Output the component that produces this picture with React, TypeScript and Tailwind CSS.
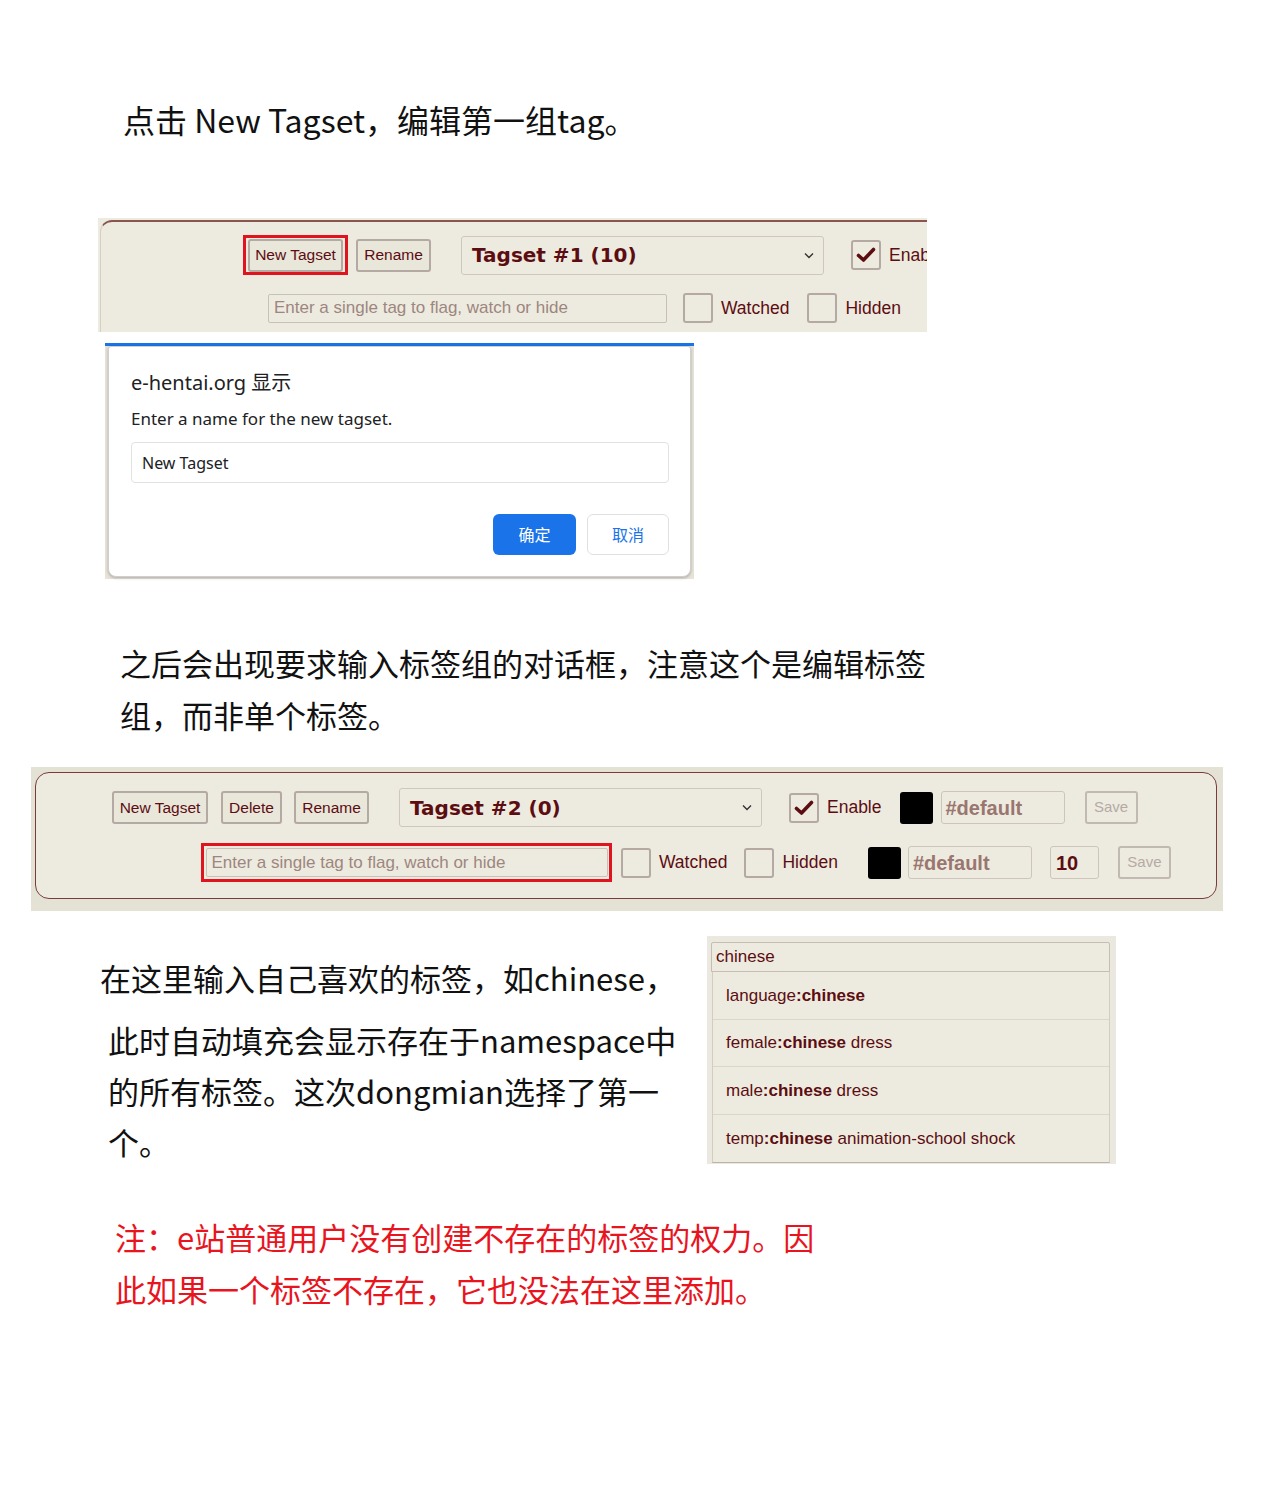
import React from "react";

const cjk = "font-['Noto_Sans_CJK_SC','Noto_Sans',sans-serif]";
const ui = "font-['Liberation_Sans',Arial,sans-serif]";
const verd = "font-['DejaVu_Sans',Verdana,sans-serif]";
const dlg = "font-['Noto_Sans','Noto_Sans_CJK_SC',sans-serif]";

function Check({ checked = false }: { checked?: boolean }) {
  return (
    <span className="flex h-[30px] w-[30px] shrink-0 items-center justify-center rounded-[3px] border-2 border-[#b4a9a3] bg-[#edebdf]">
      {checked && (
        <svg width="20" height="16" viewBox="0 0 20 16">
          <path
            d="M2.5 8.5 L7.5 13 L17.5 2.5"
            fill="none"
            stroke="#5c0d12"
            strokeWidth="3.6"
            strokeLinecap="round"
            strokeLinejoin="round"
          />
        </svg>
      )}
    </span>
  );
}

function Btn({ children, className = "" }: { children: React.ReactNode; className?: string }) {
  return (
    <span
      className={
        ui +
        " flex h-[33px] shrink-0 items-center justify-center rounded-[3px] border-2 border-[#b4a9a3] bg-[#e9e6da] text-[15.5px] text-[#5c0d12] " +
        className
      }
    >
      {children}
    </span>
  );
}

function TagSelect({ label }: { label: string }) {
  return (
    <div className="flex h-[39px] w-[363px] shrink-0 items-center justify-between rounded-[3px] border border-[#cfc7bd] bg-[#edebdf] pl-[10px] pr-[9px]">
      <span className={verd + " text-[20px] font-bold text-[#5c0d12]"}>{label}</span>
      <svg width="10" height="7" viewBox="0 0 10 7">
        <path d="M1 1.5l4 4 4-4" fill="none" stroke="#333" strokeWidth="1.4" />
      </svg>
    </div>
  );
}

function TagInput({ width }: { width: string }) {
  return (
    <div
      className={
        ui +
        " flex h-[29px] shrink-0 items-center rounded-[2px] border border-[#c9c0b6] bg-[#edebdf] pl-[5px] text-[17px] text-[#9d8680] " +
        width
      }
    >
      Enter a single tag to flag, watch or hide
    </div>
  );
}

function Swatch() {
  return <span className="block h-[32px] w-[33px] shrink-0 rounded-[3px] bg-black" />;
}

function ColorField({ width }: { width: string }) {
  return (
    <span
      className={
        ui +
        " flex h-[33px] shrink-0 items-center rounded-[3px] border border-[#cdc5bb] bg-[#edebdf] pl-[4px] text-[20px] font-bold text-[#9a7670] " +
        width
      }
    >
      #default
    </span>
  );
}

function SaveBtn() {
  return (
    <span
      className={
        ui +
        " flex h-[33px] w-[53px] shrink-0 items-center justify-center rounded-[3px] border-2 border-[#c2b9b3] bg-[#edebdf] text-[15px] text-[#b5aaa5]"
      }
    >
      Save
    </span>
  );
}

function Label({ children }: { children: React.ReactNode }) {
  return <span className={ui + " whitespace-nowrap text-[17.5px] text-[#5c0d12]"}>{children}</span>;
}

function Suggestion({ ns, rest, last = false }: { ns: string; rest?: string; last?: boolean }) {
  return (
    <div
      className={
        ui +
        " flex h-[47.5px] items-center pl-[13px] text-[17px] text-[#5c0d12] " +
        (last ? "" : "border-b border-[#dcd6ca]")
      }
    >
      <span>{ns}</span>
      <span className="font-bold">:chinese</span>
      {rest && <span>&nbsp;{rest}</span>}
    </div>
  );
}

export default function App() {
  return (
    <div className="min-h-[1487px] w-[1280px] bg-white text-[#111]">
      {/* heading */}
      <p className={cjk + " ml-[123px] pt-[93px] text-[32px] leading-[52px]"}>
        点击 New Tagset，编辑第一组tag。
      </p>

      {/* tagset toolbar */}
      <div className="ml-[98px] mt-[73px] h-[114px] w-[829px] overflow-hidden bg-[#edebdf]">
        <div className="ml-[2px] mt-[2px] h-full w-[900px] rounded-tl-[12px] border-l border-t-2 border-l-[#d6cfc3] border-t-[#8a5550] pt-[13px]">
          <div className="flex items-center pl-[142px]">
            <span className="flex h-[40px] w-[105px] shrink-0 items-center justify-center border-[3px] border-[#e0141e]">
              <Btn className="w-[95px]">New Tagset</Btn>
            </span>
            <Btn className="ml-[8px] w-[75px]">Rename</Btn>
            <div className="ml-[30px] shrink-0">
              <TagSelect label="Tagset #1 (10)" />
            </div>
            <span className="ml-[27px] shrink-0">
              <Check checked />
            </span>
            <span className="ml-[8px] shrink-0">
              <Label>Enable</Label>
            </span>
          </div>
          <div className="mt-[18px] flex items-center pl-[167px]">
            <TagInput width="w-[399px]" />
            <span className="ml-[16px] shrink-0">
              <Check />
            </span>
            <span className="ml-[8px] shrink-0">
              <Label>Watched</Label>
            </span>
            <span className="ml-[18px] shrink-0">
              <Check />
            </span>
            <span className="ml-[8px] shrink-0">
              <Label>Hidden</Label>
            </span>
          </div>
        </div>
      </div>

      {/* prompt dialog */}
      <div className="ml-[105px] mt-[11px] h-[236px] w-[589px] border-t-[3px] border-[#1a73e8] bg-[#e7e3d8] px-[3px] pb-[2px]">
        <div
          className={
            dlg +
            " h-full rounded-b-[8px] rounded-t-[3px] border border-[#cfcfcf] bg-white pl-[22px] pr-[21px] shadow-[0_1px_3px_rgba(0,0,0,0.25)]"
          }
        >
          <p className="pt-[22px] text-[20px] leading-[28px] text-[#202124]">e-hentai.org 显示</p>
          <p className="mt-[10px] text-[17px] leading-[24px] text-[#202124]">
            Enter a name for the new tagset.
          </p>
          <div className="mt-[11px] flex h-[41px] items-center rounded-[4px] border border-[#e2e2e2] pl-[10px] text-[16px] text-[#202124]">
            New Tagset
          </div>
          <div className="mt-[31px] flex justify-end gap-[11px]">
            <span className="flex h-[41px] w-[83px] items-center justify-center rounded-[6px] bg-[#1a73e8] text-[16px] text-white">
              确定
            </span>
            <span className="flex h-[41px] w-[82px] items-center justify-center rounded-[6px] border border-[#e0e0e0] text-[16px] text-[#1a73e8]">
              取消
            </span>
          </div>
        </div>
      </div>

      {/* explanation */}
      <p className={cjk + " ml-[120px] mt-[58px] text-[31px] leading-[52px]"}>
        之后会出现要求输入标签组的对话框，注意这个是编辑标签
        <br />
        组，而非单个标签。
      </p>

      {/* tagset toolbar, second tagset */}
      <div className="ml-[31px] mt-[26px] h-[144px] w-[1192px] bg-[#e4e1d5] pl-[4px] pt-[5px]">
        <div className="h-[127px] w-[1182px] rounded-[14px] border border-[#7b3b3b] bg-[#edebdf] pt-[15px]">
          <div className="flex items-center pl-[76px]">
            <Btn className="w-[96px]">New Tagset</Btn>
            <Btn className="ml-[13px] w-[61px]">Delete</Btn>
            <Btn className="ml-[12px] w-[75px]">Rename</Btn>
            <div className="ml-[30px] shrink-0">
              <TagSelect label="Tagset #2 (0)" />
            </div>
            <span className="ml-[27px] shrink-0">
              <Check checked />
            </span>
            <span className="ml-[8px] shrink-0">
              <Label>Enable</Label>
            </span>
            <span className="ml-[18px] shrink-0">
              <Swatch />
            </span>
            <span className="ml-[8px] shrink-0">
              <ColorField width="w-[124px]" />
            </span>
            <span className="ml-[20px] shrink-0">
              <SaveBtn />
            </span>
          </div>
          <div className="mt-[16px] flex items-center pl-[165px]">
            <span className="flex h-[39px] w-[411px] shrink-0 items-center justify-center border-[3px] border-[#e0141e]">
              <TagInput width="w-[402px]" />
            </span>
            <span className="ml-[9px] shrink-0">
              <Check />
            </span>
            <span className="ml-[8px] shrink-0">
              <Label>Watched</Label>
            </span>
            <span className="ml-[17px] shrink-0">
              <Check />
            </span>
            <span className="ml-[8px] shrink-0">
              <Label>Hidden</Label>
            </span>
            <span className="ml-[30px] shrink-0">
              <Swatch />
            </span>
            <span className="ml-[7px] shrink-0">
              <ColorField width="w-[124px]" />
            </span>
            <span
              className={
                ui +
                " ml-[18px] flex h-[33px] w-[49px] shrink-0 items-center rounded-[3px] border border-[#cdc5bb] pl-[5px] text-[20px] font-bold text-[#5c0d12]"
              }
            >
              10
            </span>
            <span className="ml-[19px] shrink-0">
              <SaveBtn />
            </span>
          </div>
        </div>
      </div>

      {/* autocomplete explanation */}
      <div className="mt-[25px] flex">
        <div className={cjk + " ml-[100px] w-[607px] shrink-0 pt-[16px] text-[31px]"}>
          <p className="leading-[52px]">在这里输入自己喜欢的标签，如chinese，</p>
          <p className="ml-[8px] mt-[10px] leading-[51px]">
            此时自动填充会显示存在于namespace中
            <br />
            的所有标签。这次dongmian选择了第一
            <br />
            个。
          </p>
        </div>
        <div className="h-[228px] w-[409px] shrink-0 bg-[#ebe8df] pb-[2px] pl-[4px] pr-[6px] pt-[6px]">
          <div
            className={
              ui +
              " flex h-[30px] items-center rounded-t-[2px] border border-[#c6bdb3] bg-[#edebdf] pl-[4px] text-[17px] text-[#5c0d12]"
            }
          >
            chinese
          </div>
          <div className="ml-[1px] border-x border-b border-x-[#d4ccc1] border-b-[#bdb3a8] bg-[#edebdf]">
            <Suggestion ns="language" />
            <Suggestion ns="female" rest="dress" />
            <Suggestion ns="male" rest="dress" />
            <Suggestion ns="temp" rest="animation-school shock" last />
          </div>
        </div>
      </div>

      {/* note */}
      <p className={cjk + " ml-[115px] mt-[44px] text-[31px] leading-[52px] text-[#e8141e]"}>
        注：e站普通用户没有创建不存在的标签的权力。因
        <br />
        此如果一个标签不存在，它也没法在这里添加。
      </p>
    </div>
  );
}
